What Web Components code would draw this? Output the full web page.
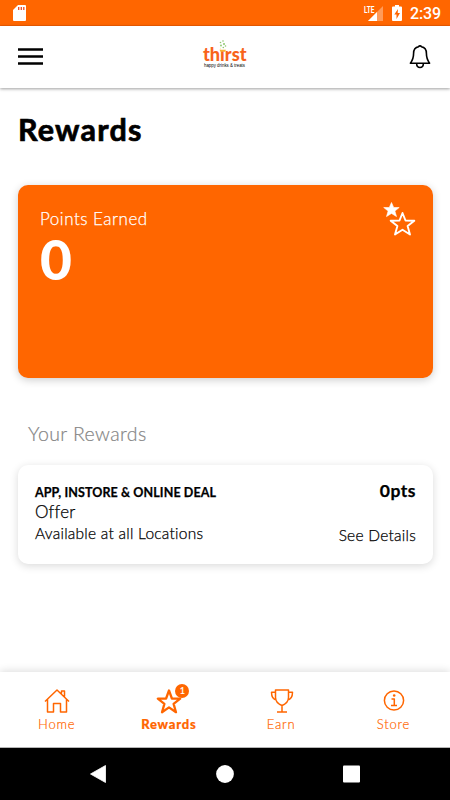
<!DOCTYPE html>
<html lang="en">
<head>
<meta charset="utf-8">
<title>Rewards</title>
<style>
  html, body {
    margin: 0;
    height: 100%;
    background: #fff;
  }
  body {
    --color-primary: #ff6600;
    font-family: Lato, "Open Sans", sans-serif;
    color: #000;
    overflow: hidden;
  }
</style>
</head>
<body>
<rewards-app></rewards-app>

<script>
class StatusBar extends HTMLElement {
  constructor() {
    super();
    this.attachShadow({ mode: 'open' });
    this.shadowRoot.innerHTML = `
      <style>
        :host {
          display: flex;
          align-items: center;
          height: 26px;
          box-sizing: border-box;
          padding: 0 9px 0 13px;
          background: var(--color-primary);
          border-bottom: 1px solid #f25c00;
          color: #fff;
          font-family: Roboto, sans-serif;
        }
        svg { display: block; }
        .signal { margin-left: auto; }
        .battery { margin: 0 8px 0 9px; }
        .time {
          font-size: 16px;
          font-weight: 500;
          line-height: 26px;
          padding-top: 2px;
          letter-spacing: -.1px;
        }
      </style>
      <svg width="13" height="16" viewBox="0 0 13 16">
        <path d="M5 0h7q1 0 1 1v14q0 1-1 1H1q-1 0-1-1V5z" fill="#fff"/>
        <path d="M5.700 2v3M8.300 2v3M10.800 2v3" stroke="#f04a20" stroke-width="1.300"/>
      </svg>
      <svg class="signal" width="20" height="18" viewBox="0 0 20 18">
        <path d="M5 17L20 2v15z" fill="#fff" opacity=".35"/>
        <path d="M5 17l9-9v9z" fill="#fff"/>
        <text x="1" y="8.500" font-family="Roboto" font-size="8.500" font-weight="700" fill="#fff" textLength="10.500" lengthAdjust="spacingAndGlyphs">LTE</text>
      </svg>
      <svg class="battery" width="10" height="16" viewBox="0 0 10 16">
        <path d="M3 0h4v1.500h2q1 0 1 1V15q0 1-1 1H1q-1 0-1-1V2.500q0-1 1-1h2z" fill="#fff"/>
        <path d="M6 4L2.300 9.500h2.200V14L8 8H5.700z" fill="#ff6600"/>
      </svg>
      <span class="time">2:39</span>
    `;
  }
}

class BrandLogo extends HTMLElement {
  constructor() {
    super();
    this.attachShadow({ mode: 'open' });
    this.shadowRoot.innerHTML = `
      <style>
        :host { display: block; }
        svg { display: block; }
      </style>
      <svg width="46" height="34" viewBox="-1 -1 46 34">
        <text x="0" y="20.500" font-family="Lato" font-size="18" font-weight="900" fill="#f8631a" textLength="43.500" lengthAdjust="spacingAndGlyphs">thirst</text>
        <path d="M17.500 6h5.500v4h-5.500z" fill="#fff"/>
        <path d="M16.500 9.800h6.500l-1 2h-4.500z" fill="#f9b233"/>
        <g fill="#8cc66c">
          <circle cx="17.500" cy="2.500" r=".8"/>
          <circle cx="20" cy="1" r=".8"/>
          <circle cx="21" cy="4" r="1"/>
          <circle cx="18" cy="5.500" r=".9"/>
          <circle cx="22.500" cy="6" r=".8"/>
          <circle cx="20.300" cy="7.500" r=".8"/>
        </g>
        <text x="1" y="26.500" font-family="Liberation Sans" font-size="4.500" fill="#000" textLength="41" lengthAdjust="spacingAndGlyphs">happy drinks &amp; treats</text>
      </svg>
    `;
  }
}

class AppHeader extends HTMLElement {
  constructor() {
    super();
    this.attachShadow({ mode: 'open' });
    this.shadowRoot.innerHTML = `
      <style>
        :host {
          display: grid;
          grid-template-columns: 1fr auto 1fr;
          align-items: center;
          height: 62px;
          box-sizing: border-box;
          padding: 0 19px 0 18px;
          background: #fff;
          box-shadow: 0 1px 3px rgba(0, 0, 0, .38);
        }
        svg { display: block; }
        .menu, .bell { margin-bottom: 1px; }
        .bell { justify-self: end; }
        brand-logo { padding-bottom: 3px; }
      </style>
      <svg class="menu" width="25" height="17" viewBox="0 0 25 17">
        <path d="M0 1.500h25M0 8.500h25M0 15.500h25" stroke="#000" stroke-width="2.400"/>
      </svg>
      <brand-logo></brand-logo>
      <svg class="bell" width="22" height="26" viewBox="0 0 22 26" fill="none" stroke="#000" stroke-width="1.600" stroke-linejoin="round">
        <path d="M9.600 2.800a1.500 1.500 0 0 1 2.800 0C16 3.500 17.400 6 17.400 9.300c0 5.200.8 6.800 3.200 9.900H1.400c2.400-3.100 3.200-4.700 3.200-9.900C4.600 6 6 3.500 9.600 2.800z"/>
        <path d="M7.600 19.500c.2 5.400 6.600 5.400 6.800 0"/>
      </svg>
    `;
  }
}

class PointsCard extends HTMLElement {
  constructor() {
    super();
    this.attachShadow({ mode: 'open' });
    this.shadowRoot.innerHTML = `
      <style>
        :host {
          display: flex;
          justify-content: space-between;
          height: 193px;
          box-sizing: border-box;
          padding: 17px 17px 0 22px;
          border-radius: 10px;
          background: var(--color-primary);
          color: #fff;
          box-shadow: 0 2px 9px rgba(0, 0, 0, .2);
        }
        .label {
          margin-top: 6px;
          font-size: 17px;
          font-weight: 300;
          line-height: 21px;
          letter-spacing: .52px;
          -webkit-text-stroke: .25px;
        }
        .value {
          margin-top: 3px;
          font-size: 55px;
          font-weight: 900;
          line-height: 54px;
        }
      </style>
      <div>
        <div class="label"><slot name="label"></slot></div>
        <div class="value"><slot></slot></div>
      </div>
      <svg width="33" height="36" viewBox="0 0 33 36">
        <path d="M8.500 .5l2.200 5h5.500l-4.300 3.600 1.600 5.500-5-3.200-5 3.200 1.600-5.500L.7 5.500h5.600z" fill="#fff" stroke="#fff" stroke-width=".6"/>
        <path d="M19.500 11l3 7.500 8.800.2-6.700 5.300 2.400 8.500-7.500-4.800-7.500 4.800 2.400-8.500-6.700-5.300 8.800-.2z" fill="none" stroke="#fff" stroke-width="1.900" stroke-linejoin="round"/>
      </svg>
    `;
  }
}

class RewardCard extends HTMLElement {
  constructor() {
    super();
    this.attachShadow({ mode: 'open' });
    this.shadowRoot.innerHTML = `
      <style>
        :host {
          display: flex;
          justify-content: space-between;
          height: 99px;
          box-sizing: border-box;
          padding: 16px 17px 0;
          border-radius: 10px;
          background: #fff;
          box-shadow: 0 2px 9px rgba(0, 0, 0, .15);
          font-weight: 300;
          -webkit-text-stroke: .25px;
        }
        .info { padding-top: 4px; }
        .kind {
          font-size: 12.5px;
          font-weight: 700;
          line-height: 16px;
          letter-spacing: .1px;
        }
        .name {
          font-size: 17px;
          line-height: 22px;
          letter-spacing: .2px;
        }
        .place {
          font-size: 15.5px;
          line-height: 20px;
          letter-spacing: .25px;
        }
        .side { text-align: right; }
        .points {
          font-size: 17.5px;
          font-weight: 700;
          line-height: 20px;
          letter-spacing: .5px;
        }
        .more {
          margin-top: 24px;
          font-size: 15.5px;
          line-height: 20px;
          letter-spacing: .25px;
        }
      </style>
      <div class="info">
        <div class="kind"><slot name="kind"></slot></div>
        <div class="name"><slot name="name"></slot></div>
        <div class="place"><slot name="place"></slot></div>
      </div>
      <div class="side">
        <div class="points"><slot name="points"></slot></div>
        <div class="more">See Details</div>
      </div>
    `;
  }
}

const TAB_ICONS = {
  home: '<path d="M1 13.500L13 2l12 11.500M3.500 11.500V24h6v-8.500h7V24h6V11.500M17.500 5.500V3h3v5.500"/>',
  star: '<path stroke-width="2.300" d="M13 2.500l2.900 8 8.300.2-6.600 5.200 2.400 8.300-7-4.800-7 4.800 2.400-8.300-6.600-5.200 8.300-.2z"/>',
  cup: '<path d="M6.500 2h13v7.500c0 4-3 6.500-6.500 8-3.500-1.500-6.500-4-6.500-8zM13 17.500V24M8 24h10M6.500 4.200h-4c0 4.300 1.300 7 5 8M19.500 4.200h4c0 4.300-1.300 7-5 8"/>',
  info: '<circle cx="13" cy="12.500" r="9.600"/><path d="M10.500 11h2.800v6.500M10 17.500h6"/><circle cx="13.200" cy="7.500" r="1.300" fill="currentColor" stroke="none"/>'
};

class TabItem extends HTMLElement {
  constructor() {
    super();
    this.attachShadow({ mode: 'open' });
  }

  connectedCallback() {
    const badge = this.getAttribute('badge');
    this.shadowRoot.innerHTML = `
      <style>
        :host {
          display: flex;
          flex-direction: column;
          align-items: center;
          flex: 1;
          color: var(--color-primary);
          font-size: 13px;
          font-weight: 300;
          line-height: 19px;
          letter-spacing: .8px;
          -webkit-text-stroke: .2px;
        }
        :host([active]) {
          font-weight: 900;
          letter-spacing: .8px;
        }
        .icon {
          position: relative;
          height: 27px;
        }
        svg { display: block; }
        .label { margin-right: 1px; }

        /* Notification count over the icon */
        .badge {
          position: absolute;
          left: 19px;
          top: -4px;
          width: 14px;
          height: 14px;
          border-radius: 50%;
          background: var(--color-primary);
          color: #fff;
          font-size: 9px;
          font-weight: 400;
          line-height: 14px;
          letter-spacing: 0;
          text-align: center;
        }
      </style>
      <div class="icon">
        <svg width="26" height="26" viewBox="0 0 26 26" fill="none" stroke="currentColor" stroke-width="1.500" stroke-linejoin="round">${TAB_ICONS[this.getAttribute('icon')]}</svg>
        ${badge ? `<span class="badge">${badge}</span>` : ''}
      </div>
      <div class="label"><slot></slot></div>
    `;
  }
}

class TabBar extends HTMLElement {
  constructor() {
    super();
    this.attachShadow({ mode: 'open' });
    this.shadowRoot.innerHTML = `
      <style>
        :host {
          display: flex;
          height: 76px;
          box-sizing: border-box;
          padding: 16px 0 0 1px;
          background: #fff;
          border-bottom: 1px solid #b5b5b5;
          box-shadow: 0 -1px 8px rgba(0, 0, 0, .14);
        }
      </style>
      <slot></slot>
    `;
  }
}

class SystemNav extends HTMLElement {
  constructor() {
    super();
    this.attachShadow({ mode: 'open' });
    this.shadowRoot.innerHTML = `
      <style>
        :host {
          display: flex;
          justify-content: space-between;
          align-items: center;
          height: 52px;
          padding: 0 90px;
          background: #000;
        }
        svg { display: block; }
      </style>
      <svg width="18" height="18" viewBox="0 0 18 18"><path d="M15.500 .5v17L.5 9z" fill="#fff" stroke="#fff" stroke-linejoin="round" stroke-width=".8"/></svg>
      <svg width="18" height="18" viewBox="0 0 18 18"><circle cx="9" cy="9" r="8.900" fill="#fff"/></svg>
      <svg width="18" height="18" viewBox="0 0 18 18"><rect x="1" y=".6" width="17" height="17" rx="1" fill="#fff"/></svg>
    `;
  }
}

class RewardsApp extends HTMLElement {
  constructor() {
    super();
    this.attachShadow({ mode: 'open' });
    this.shadowRoot.innerHTML = `
      <style>
        :host {
          display: flex;
          flex-direction: column;
          height: 100vh;
        }
        main {
          flex: 1;
          padding: 23px 17px 0 18px;
        }
        h1 {
          margin: 0 0 38px;
          font-size: 30.5px;
          font-weight: 700;
          line-height: 36px;
          letter-spacing: 1.2px;
          -webkit-text-stroke: .7px;
        }
        h2 {
          margin: 44px 0 19px 10px;
          color: #858585;
          font-size: 19.5px;
          font-weight: 300;
          line-height: 24px;
          letter-spacing: .4px;
          -webkit-text-stroke: .2px;
        }
      </style>
      <status-bar></status-bar>
      <app-header></app-header>
      <main>
        <h1>Rewards</h1>
        <points-card>
          <span slot="label">Points Earned</span>0
        </points-card>
        <h2>Your Rewards</h2>
        <reward-card>
          <span slot="kind">APP, INSTORE &amp; ONLINE DEAL</span>
          <span slot="name">Offer</span>
          <span slot="place">Available at all Locations</span>
          <span slot="points">0pts</span>
        </reward-card>
      </main>
      <tab-bar>
        <tab-item icon="home">Home</tab-item>
        <tab-item icon="star" badge="1" active>Rewards</tab-item>
        <tab-item icon="cup">Earn</tab-item>
        <tab-item icon="info">Store</tab-item>
      </tab-bar>
      <system-nav></system-nav>
    `;
  }
}

customElements.define('status-bar', StatusBar);
customElements.define('brand-logo', BrandLogo);
customElements.define('app-header', AppHeader);
customElements.define('points-card', PointsCard);
customElements.define('reward-card', RewardCard);
customElements.define('tab-item', TabItem);
customElements.define('tab-bar', TabBar);
customElements.define('system-nav', SystemNav);
customElements.define('rewards-app', RewardsApp);
</script>
</body>
</html>
